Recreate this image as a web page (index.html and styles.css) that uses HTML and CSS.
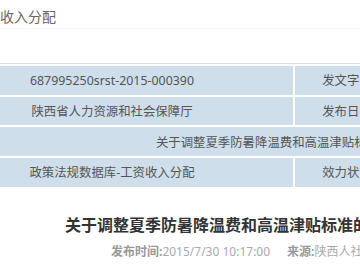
FILE: index.html
```
<!DOCTYPE html>
<html lang="zh">
<head>
<meta charset="utf-8">
<link rel="stylesheet" href="styles.css">
</head>
<body>
<div class="page">
  <div class="crumb">工资收入分配</div>
  <table class="info">
    <colgroup><col class="c1"><col class="c2"><col class="c3"></colgroup>
    <tr><td>687995250srst-2015-000390</td><td>发文字号</td><td></td></tr>
    <tr><td>陕西省人力资源和社会保障厅</td><td>发布日期</td><td></td></tr>
    <tr><td colspan="3">关于调整夏季防暑降温费和高温津贴标准的通知</td></tr>
    <tr><td>政策法规数据库-工资收入分配</td><td>效力状态</td><td></td></tr>
  </table>
  <h1 class="title">关于调整夏季防暑降温费和高温津贴标准的通知</h1>
  <div class="meta">
    <span><b>发布时间:</b>2015/7/30 10:17:00</span>
    <span><b>来源:</b>陕西人社厅</span>
  </div>
</div>
</body>
</html>
```
FILE: styles.css
```
html, body { margin: 0; padding: 0; background: #fff; }
body { width: 360px; height: 270px; overflow: hidden; font-family: "Noto Sans", "Noto Sans CJK SC", sans-serif; }
.page { width: 360px; }
.crumb {
  margin-left: -28px;
  height: 28px;
  line-height: 34px;
  font-size: 14px;
  color: #666;
  white-space: nowrap;
  border-bottom: 1px dotted #eee;
}
.info {
  margin-top: 34px;
  margin-left: -71px;
  width: 712px;
  table-layout: fixed;
  border-collapse: separate;
  border-spacing: 2px;
  border-top: 1px solid #ddd;
  font-size: 12.4px;
  color: #555;
}
.c1 { width: 362px; }
.c2 { width: 104px; }
.c3 { width: 240px; }
.info td {
  height: 28.7px;
  padding: 0;
  background: #cfdeeb;
  text-align: center;
  white-space: nowrap;
  overflow: hidden;
}
.title {
  margin: 24px 0 0 65px;
  font-size: 16px;
  line-height: 24px;
  font-weight: bold;
  color: #333;
  white-space: nowrap;
}
.meta {
  margin: 5px 0 0 111px;
  font-size: 12px;
  line-height: 20px;
  color: #aaa;
  white-space: nowrap;
  display: flex;
  gap: 17px;
}
.meta b { color: #999; }
```
